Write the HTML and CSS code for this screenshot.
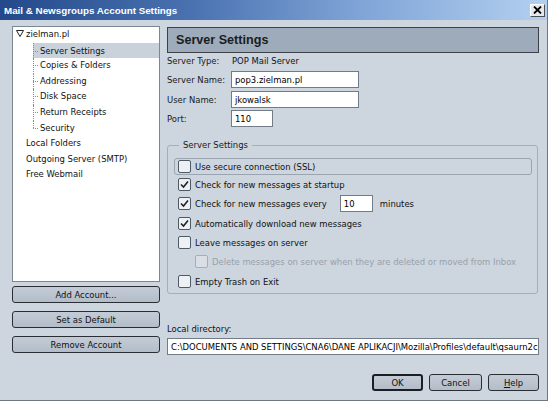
FILE: index.html
```html
<!DOCTYPE html>
<html>
<head>
<meta charset="utf-8">
<link rel="stylesheet" href="styles.css">
</head>
<body>
<div class="window">
  <div class="titlebar">
    <span class="title">Mail &amp; Newsgroups Account Settings</span>
    <span class="close"><svg width="9" height="8" viewBox="0 0 9 8"><path d="M1 0.5 L8 7.5 M8 0.5 L1 7.5" stroke="#000" stroke-width="1.8"/></svg></span>
  </div>
  <div class="main">
    <div class="left">
      <div class="tree">
        <div class="row top"><svg class="twisty" width="8" height="7" viewBox="0 0 8 7"><path d="M0.5 0.5 H7.5 L4 6.5 Z" fill="#fff" stroke="#222" stroke-width="1"/></svg>zielman.pl</div>
        <div class="children">
          <div class="row child sel">Server Settings</div>
          <div class="row child">Copies &amp; Folders</div>
          <div class="row child">Addressing</div>
          <div class="row child">Disk Space</div>
          <div class="row child">Return Receipts</div>
          <div class="row child last">Security</div>
        </div>
        <div class="row top">Local Folders</div>
        <div class="row top">Outgoing Server (SMTP)</div>
        <div class="row top">Free Webmail</div>
      </div>
      <div class="btn side first">Add Account...</div>
      <div class="btn side">Set as Default</div>
      <div class="btn side">Remove Account</div>
    </div>
    <div class="right">
      <div class="header">Server Settings</div>
      <div class="fields">
        <span class="lbl">Server Type:</span><span class="val">POP Mail Server</span>
        <span class="lbl">Server Name:</span><span class="input name">pop3.zielman.pl</span>
        <span class="lbl">User Name:</span><span class="input name">jkowalsk</span>
        <span class="lbl">Port:</span><span class="input port">110</span>
      </div>
      <fieldset class="group">
        <legend>Server Settings</legend>
        <div class="crow ssl"><span class="cb"></span>Use secure connection (SSL)</div>
        <div class="crow"><span class="cb on"><svg width="9" height="9" viewBox="0 0 9 9"><path d="M1 4.5 L3.5 7 L8 1.5" fill="none" stroke="#1e2328" stroke-width="1.6"/></svg></span>Check for new messages at startup</div>
        <div class="crow"><span class="cb on"><svg width="9" height="9" viewBox="0 0 9 9"><path d="M1 4.5 L3.5 7 L8 1.5" fill="none" stroke="#1e2328" stroke-width="1.6"/></svg></span>Check for new messages every<span class="input mins">10</span><span class="unit">minutes</span></div>
        <div class="crow"><span class="cb on"><svg width="9" height="9" viewBox="0 0 9 9"><path d="M1 4.5 L3.5 7 L8 1.5" fill="none" stroke="#1e2328" stroke-width="1.6"/></svg></span>Automatically download new messages</div>
        <div class="crow"><span class="cb"></span>Leave messages on server</div>
        <div class="crow sub disabled"><span class="cb"></span>Delete messages on server when they are deleted or moved from Inbox</div>
        <div class="crow"><span class="cb"></span>Empty Trash on Exit</div>
      </fieldset>
      <div class="dirlabel">Local directory:</div>
      <div class="input dir">C:\DOCUMENTS AND SETTINGS\CNA6\DANE APLIKACJI\Mozilla\Profiles\default\qsaurn2c</div>
      <div class="actions">
        <div class="btn ok">OK</div>
        <div class="btn cancel">Cancel</div>
        <div class="btn help"><u>H</u>elp</div>
      </div>
    </div>
  </div>
</div>
</body>
</html>
```

FILE: styles.css
```css
html, body {
  margin: 0;
  padding: 0;
  background: #ffffff;
}
body {
  font-family: "DejaVu Sans Condensed", "Liberation Sans", Arial, sans-serif;
  font-size: 9.4px;
  color: #111;
}
.window {
  width: 548px;
  height: 401px;
  background: #cdd5de;
  border-right: 1px solid #6f7780;
  border-bottom: 1px solid #6f7780;
  box-sizing: border-box;
  overflow: hidden;
}
.titlebar {
  height: 20px;
  background: linear-gradient(to right, #23498a 0%, #4a72b0 35%, #7ea3d6 65%, #b3d0f0 100%);
  display: flex;
  align-items: center;
  justify-content: space-between;
  padding: 0 2px 0 4px;
}
.title {
  color: #fff;
  font-weight: bold;
  font-size: 9.8px;
  font-family: "Liberation Sans", Arial, sans-serif;
}
.close {
  width: 13px;
  height: 11px;
  background: #e6e9ec;
  border: 1px solid;
  border-color: #ffffff #4a4f55 #4a4f55 #ffffff;
  display: flex;
  align-items: center;
  justify-content: center;
}
.main {
  display: flex;
  padding: 6px 0 0 12px;
  gap: 7px;
}
.left {
  width: 148px;
  display: flex;
  flex-direction: column;
}
.tree {
  height: 256px;
  box-sizing: border-box;
  background: #fff;
  border: 1px solid #7c8794;
}
.row {
  height: 15.6px;
  line-height: 13px;
  white-space: nowrap;
}
.row.top {
  padding-left: 13px;
}
.twisty {
  margin-left: -10px;
  margin-right: 2px;
  vertical-align: 0px;
}
.children {
  position: relative;
}
.row.child {
  position: relative;
  padding-left: 27px;
}
.row.child::before {
  content: "";
  position: absolute;
  left: 20px;
  top: 7px;
  width: 5px;
  border-top: 1px dotted #8a8a8a;
}
.row.child::after {
  content: "";
  position: absolute;
  left: 20px;
  top: 0;
  height: 100%;
  border-left: 1px dotted #8a8a8a;
}
.row.child.last::after {
  height: 7px;
}
.row.sel {
  background: #c9d1db;
  margin-left: 20px;
  padding-left: 7px;
  line-height: 15.6px;
}
.row.sel::before {
  left: 0;
  top: 8px;
}
.row.sel::after {
  left: 0;
}
.btn {
  height: 17px;
  box-sizing: border-box;
  border: 1px solid #2a2e33;
  border-radius: 3px;
  background: linear-gradient(#c3ccd6, #b3bdc9);
  display: flex;
  align-items: center;
  justify-content: center;
  color: #111;
}
.btn.side {
  margin-top: 8px;
}
.btn.side.first {
  margin-top: 4px;
}
.right {
  width: 372px;
  display: flex;
  flex-direction: column;
  margin-top: 1px;
}
.header {
  height: 26px;
  box-sizing: border-box;
  border: 1px solid #3c4046;
  background: #9eabba;
  font-family: "Liberation Sans", Arial, sans-serif;
  font-weight: bold;
  font-size: 12.6px;
  color: #1a1d21;
  display: flex;
  align-items: center;
  padding-left: 8px;
}
.fields {
  display: grid;
  grid-template-columns: 64px auto;
  grid-template-rows: 15.5px 17px 17px 17px;
  row-gap: 2.5px;
  align-items: center;
  justify-items: start;
}
.lbl {
  color: #1a1a1a;
}
.val {
  padding-left: 1px;
}
.input {
  height: 17px;
  box-sizing: border-box;
  background: #fff;
  border: 1px solid #717c88;
  padding-left: 3px;
  display: flex;
  align-items: center;
  white-space: nowrap;
  overflow: hidden;
  color: #000;
}
.input.name {
  width: 128px;
}
.input.port {
  width: 42px;
}
.group {
  margin: 12px 0 0 0;
  width: 371px;
  box-sizing: border-box;
  border: 1px solid #a4adb8;
  border-radius: 3px;
  padding: 0 5px 2px 6px;
}
.group legend {
  line-height: 12px;
  padding: 0 4px;
  margin-left: 5px;
  color: #1a1a1a;
}
.crow {
  height: 19.3px;
  display: flex;
  align-items: center;
  padding-left: 4px;
  white-space: nowrap;
}
.crow.ssl {
  height: 17px;
  box-sizing: border-box;
  margin-top: 7px;
  border: 1px solid #9aa5b1;
  border-radius: 3px;
  padding-left: 3px;
}
.cb {
  width: 13px;
  height: 13px;
  box-sizing: border-box;
  border: 1px solid #4f5964;
  border-radius: 2px;
  background: #eef1f4;
  margin-right: 4px;
  display: flex;
  align-items: center;
  justify-content: center;
  flex: none;
}
.crow.sub {
  padding-left: 21px;
}
.crow.disabled {
  color: #98a1ab;
}
.crow.disabled .cb {
  border-color: #a5aeb8;
  background: #d9dfe5;
}
.input.mins {
  width: 33px;
  margin-left: 13px;
}
.unit {
  margin-left: 7px;
}
.dirlabel {
  margin-top: 28px;
  line-height: 13px;
}
.input.dir {
  margin-top: 3px;
  width: 372px;
}
.actions {
  margin-top: 19px;
  display: flex;
  justify-content: flex-end;
  gap: 6px;
}
.btn.ok {
  width: 51px;
  border-width: 2px;
  border-color: #1c1f22;
}
.btn.cancel {
  width: 53px;
}
.btn.help {
  width: 51px;
}
```
